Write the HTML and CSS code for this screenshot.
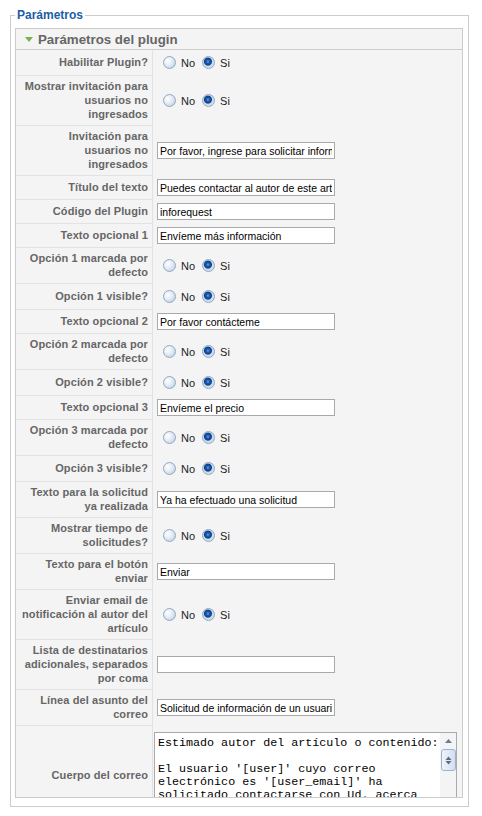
FILE: index.html
```html
<!DOCTYPE html>
<html lang="es">
<head>
  <meta charset="UTF-8">
  <meta name="viewport" content="width=device-width, initial-scale=1.0">
  <title>Parámetros del plugin</title>
  <link rel="stylesheet" href="styles.css">
</head>
<body>

  <fieldset class="params">
    <legend>Parámetros</legend>

    <div class="panel">
      <div class="panel-title"><span class="arrow"></span>Parámetros del plugin</div>

      <div class="paramlist">
        <div class="row">
          <div class="key">Habilitar Plugin?</div>
          <div class="value radios">
            <input type="radio" name="enabled" id="enabled0"><label for="enabled0">No</label>
            <input type="radio" name="enabled" id="enabled1" checked><label for="enabled1">Si</label>
          </div>
        </div>
        <div class="row">
          <div class="key">Mostrar invitación para<br>usuarios no<br>ingresados</div>
          <div class="value radios">
            <input type="radio" name="invite" id="invite0"><label for="invite0">No</label>
            <input type="radio" name="invite" id="invite1" checked><label for="invite1">Si</label>
          </div>
        </div>
        <div class="row">
          <div class="key">Invitación para<br>usuarios no<br>ingresados</div>
          <div class="value"><input type="text" value="Por favor, ingrese para solicitar información"></div>
        </div>
        <div class="row">
          <div class="key">Título del texto</div>
          <div class="value"><input type="text" value="Puedes contactar al autor de este artículo"></div>
        </div>
        <div class="row">
          <div class="key">Código del Plugin</div>
          <div class="value"><input type="text" value="inforequest"></div>
        </div>
        <div class="row">
          <div class="key">Texto opcional 1</div>
          <div class="value"><input type="text" value="Envíeme más información"></div>
        </div>
        <div class="row">
          <div class="key">Opción 1 marcada por<br>defecto</div>
          <div class="value radios">
            <input type="radio" name="opt1" id="opt1a"><label for="opt1a">No</label>
            <input type="radio" name="opt1" id="opt1b" checked><label for="opt1b">Si</label>
          </div>
        </div>
        <div class="row">
          <div class="key">Opción 1 visible?</div>
          <div class="value radios">
            <input type="radio" name="vis1" id="vis1a"><label for="vis1a">No</label>
            <input type="radio" name="vis1" id="vis1b" checked><label for="vis1b">Si</label>
          </div>
        </div>
        <div class="row">
          <div class="key">Texto opcional 2</div>
          <div class="value"><input type="text" value="Por favor contácteme"></div>
        </div>
        <div class="row">
          <div class="key">Opción 2 marcada por<br>defecto</div>
          <div class="value radios">
            <input type="radio" name="opt2" id="opt2a"><label for="opt2a">No</label>
            <input type="radio" name="opt2" id="opt2b" checked><label for="opt2b">Si</label>
          </div>
        </div>
        <div class="row">
          <div class="key">Opción 2 visible?</div>
          <div class="value radios">
            <input type="radio" name="vis2" id="vis2a"><label for="vis2a">No</label>
            <input type="radio" name="vis2" id="vis2b" checked><label for="vis2b">Si</label>
          </div>
        </div>
        <div class="row">
          <div class="key">Texto opcional 3</div>
          <div class="value"><input type="text" value="Envíeme el precio"></div>
        </div>
        <div class="row">
          <div class="key">Opción 3 marcada por<br>defecto</div>
          <div class="value radios">
            <input type="radio" name="opt3" id="opt3a"><label for="opt3a">No</label>
            <input type="radio" name="opt3" id="opt3b" checked><label for="opt3b">Si</label>
          </div>
        </div>
        <div class="row">
          <div class="key">Opción 3 visible?</div>
          <div class="value radios">
            <input type="radio" name="vis3" id="vis3a"><label for="vis3a">No</label>
            <input type="radio" name="vis3" id="vis3b" checked><label for="vis3b">Si</label>
          </div>
        </div>
        <div class="row">
          <div class="key">Texto para la solicitud<br>ya realizada</div>
          <div class="value"><input type="text" value="Ya ha efectuado una solicitud"></div>
        </div>
        <div class="row">
          <div class="key">Mostrar tiempo de<br>solicitudes?</div>
          <div class="value radios">
            <input type="radio" name="time" id="time0"><label for="time0">No</label>
            <input type="radio" name="time" id="time1" checked><label for="time1">Si</label>
          </div>
        </div>
        <div class="row">
          <div class="key">Texto para el botón<br>enviar</div>
          <div class="value"><input type="text" value="Enviar"></div>
        </div>
        <div class="row">
          <div class="key">Enviar email de<br>notificación al autor del<br>artículo</div>
          <div class="value radios">
            <input type="radio" name="notify" id="notify0"><label for="notify0">No</label>
            <input type="radio" name="notify" id="notify1" checked><label for="notify1">Si</label>
          </div>
        </div>
        <div class="row">
          <div class="key">Lista de destinatarios<br>adicionales, separados<br>por coma</div>
          <div class="value"><input type="text" value=""></div>
        </div>
        <div class="row">
          <div class="key">Línea del asunto del<br>correo</div>
          <div class="value"><input type="text" value="Solicitud de información de un usuario"></div>
        </div>
        <div class="row">
          <div class="key">Cuerpo del correo</div>
          <div class="value body-cell">
            <div class="textarea-box">
              <textarea rows="7">Estimado autor del artículo o contenido:

El usuario '[user]' cuyo correo electrónico es '[user_email]' ha solicitado contactarse con Ud. acerca del artículo '[title]'.</textarea>
              <div class="scrollbar">
                <svg class="sb-up" width="7" height="4" viewBox="0 0 7 4"><path d="M0 4 L3.5 0 L7 4 Z" fill="#6d7a8c"/></svg>
                <div class="sb-thumb">
                  <svg width="7" height="9" viewBox="0 0 7 9"><path d="M0.5 4 L3.5 0.5 L6.5 4 Z M0.5 5 L3.5 8.5 L6.5 5 Z" fill="#5a6b86"/></svg>
                </div>
              </div>
            </div>
          </div>
        </div>
      </div>
    </div>
  </fieldset>

</body>
</html>
```

FILE: styles.css
```css
body {
  margin: 0;
  background: #fff;
  font-family: "Liberation Sans", Arial, sans-serif;
  font-size: 11px;
}

.params {
  box-sizing: border-box;
  width: 459px;
  margin: 8px 0 0 10px;
  padding: 6px 5px 8px 4px;
  border: 1px solid #ccc;
  min-width: 0;
}
.params legend {
  padding: 0 2px;
  font-size: 12px;
  line-height: 14px;
  font-weight: bold;
  color: #1b5ea5;
}

.panel {
  box-sizing: border-box;
  height: 770px;
  border: 1px solid #ccc;
  background: #f4f4f4;
  overflow: hidden;
}
.panel-title {
  height: 20px;
  display: flex;
  align-items: center;
  padding-left: 9px;
  border-bottom: 1px solid #ccc;
  font-size: 13.3px;
  font-weight: bold;
  color: #666;
}
.arrow {
  width: 0;
  height: 0;
  margin: 1px 5px 0 0;
  border-left: 4px solid transparent;
  border-right: 4px solid transparent;
  border-top: 5px solid #7ab24c;
}

.row {
  display: grid;
  grid-template-columns: 137px 1fr;
}
.key {
  display: flex;
  align-items: center;
  justify-content: flex-end;
  padding: 3px 4px 4px 2px;
  line-height: 14px;
  text-align: right;
  font-weight: bold;
  letter-spacing: 0.1px;
  color: #666;
  border-right: 1px solid #e2e2e2;
  border-bottom: 1px solid #e2e2e2;
}
.value {
  box-sizing: border-box;
  display: flex;
  align-items: center;
  padding: 3px 0 3px 4px;
  border-bottom: 1px solid transparent;
}
.value.radios {
  min-height: 26px;
}

.value input[type=text] {
  box-sizing: border-box;
  width: 178px;
  height: 17px;
  margin: 0;
  padding: 0 2px;
  border: 1px solid #aaa;
  background: #fff;
  font-family: "Liberation Sans", Arial, sans-serif;
  font-size: 10.5px;
  color: #000;
}

.radios input[type=radio] {
  appearance: none;
  -webkit-appearance: none;
  box-sizing: border-box;
  width: 13px;
  height: 13px;
  margin: 0 0 0 6px;
  border: 1px solid #90a8c6;
  border-radius: 50%;
  background: radial-gradient(circle at 35% 35%, #fff 0, #eaf0f6 35%, #b9cadf 100%);
}
.radios input[type=radio]:checked {
  background: radial-gradient(circle at 45% 42%, #7aa8df 0, #1f5fb3 1.5px, #0d3f86 3.5px, #c9d8ea 4.5px, #e4ecf5 100%);
}
.radios input[type=radio] + label {
  margin-left: 5px;
  color: #222;
}
.radios input[type=radio] ~ input[type=radio] {
  margin-left: 7px;
}

.body-cell {
  align-items: flex-start;
  padding: 6px 0 2px 1px;
}
.textarea-box {
  display: flex;
  width: 303px;
  height: 90px;
  box-sizing: border-box;
  border: 1px solid #aaa;
  background: #fff;
}
.textarea-box textarea {
  flex: 1;
  margin: 0;
  padding: 4px 0 0 3px;
  border: none;
  outline: none;
  resize: none;
  overflow: hidden;
  font-family: "Liberation Mono", "Courier New", monospace;
  font-size: 11.7px;
  line-height: 13px;
  color: #000;
}
.scrollbar {
  width: 16px;
  display: flex;
  flex-direction: column;
  align-items: center;
  background: #f3f4f6;
}
.sb-up {
  margin: 6px 0 6px 0;
}
.sb-thumb {
  box-sizing: border-box;
  width: 15px;
  height: 22px;
  display: flex;
  align-items: center;
  justify-content: center;
  border: 1px solid #9eb1cd;
  border-radius: 3px;
  background: linear-gradient(to right, #eef3fb, #d3dff0);
}
```
